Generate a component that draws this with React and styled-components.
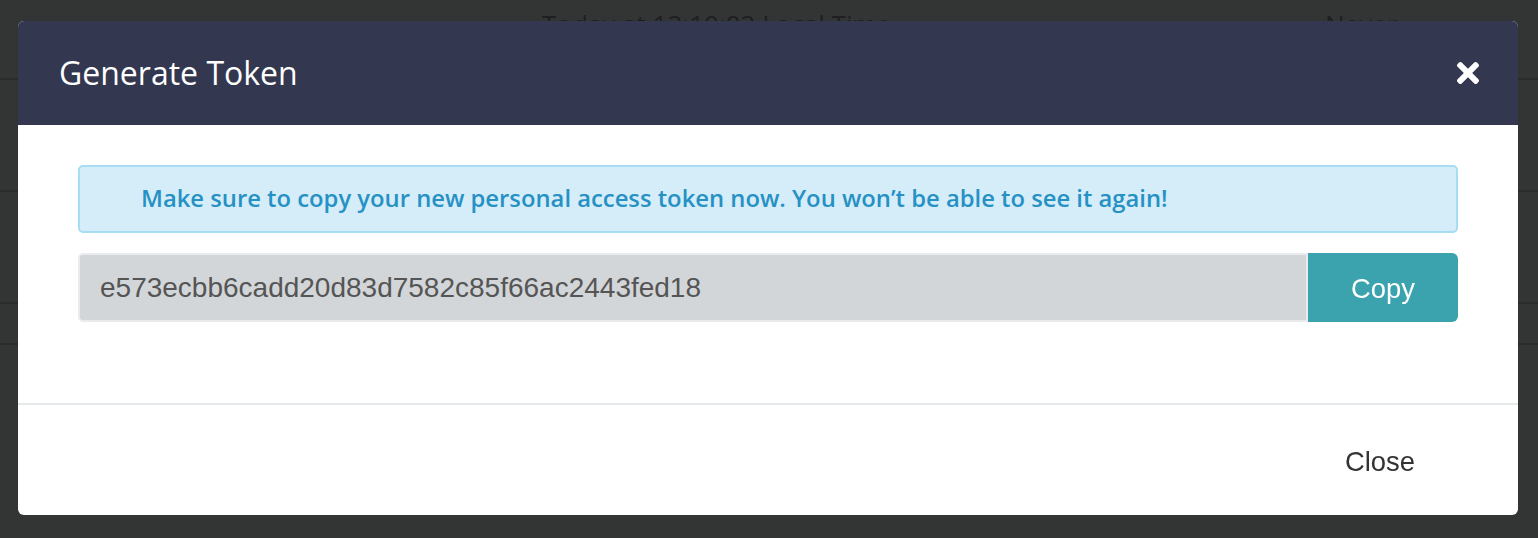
import styled, { createGlobalStyle } from "styled-components";
import { FaTimes } from "react-icons/fa";

const GlobalStyle = createGlobalStyle`
  html, body {
    margin: 0;
    padding: 0;
    background: #333434;
    font-family: "Open Sans", "Liberation Sans", sans-serif;
  }
`;

const TOKEN = "e573ecbb6cadd20d83d7582c85f66ac2443fed18";

function App() {
  return (
    <>
      <GlobalStyle />
      <Page>
        <TableRow $height={80}>
          <Cell $width={542} />
          <Cell $width={783}>Today at 12:10:02 Local Time</Cell>
          <Cell>Never</Cell>
        </TableRow>
        <TableRow $height={112} />
        <TableRow $height={112} />
        <TableRow $height={41} />
      </Page>

      <Backdrop>
        <Modal>
          <ModalHeader>
            <ModalTitle>Generate Token</ModalTitle>
            <CloseIcon aria-label="Close">
              <FaTimes />
            </CloseIcon>
          </ModalHeader>
          <ModalBody>
            <Alert>
              Make sure to copy your new personal access token now. You won’t be
              able to see it again!
            </Alert>
            <InputGroup>
              <TokenInput readOnly value={TOKEN} />
              <CopyButton>Copy</CopyButton>
            </InputGroup>
          </ModalBody>
          <ModalFooter>
            <FooterButton>Close</FooterButton>
          </ModalFooter>
        </Modal>
      </Backdrop>
    </>
  );
}

const Page = styled.div`
  width: 1538px;
  height: 538px;
  overflow: hidden;
  display: flex;
  flex-direction: column;
`;

const TableRow = styled.div`
  height: ${({ $height }) => $height}px;
  flex-shrink: 0;
  display: flex;
  border-bottom: 2px solid #2b2b2b;
  box-sizing: border-box;
`;

const Cell = styled.div`
  width: ${({ $width }) => ($width ? `${$width}px` : "auto")};
  flex-shrink: 0;
  padding-top: 6px;
  font-size: 26px;
  color: #1f1f1f;
`;

const Backdrop = styled.div`
  position: fixed;
  inset: 0;
`;

const Modal = styled.div`
  position: absolute;
  left: 18px;
  top: 21px;
  width: 1500px;
  height: 494px;
  background: #fff;
  border-radius: 6px;
  overflow: hidden;
  display: flex;
  flex-direction: column;
`;

const ModalHeader = styled.div`
  height: 104px;
  flex-shrink: 0;
  background: #333850;
  display: flex;
  align-items: center;
  justify-content: space-between;
  padding: 0 38px 0 41px;
  box-sizing: border-box;
`;

const ModalTitle = styled.h4`
  margin: 0 0 2px;
  font-family: "Open Sans", sans-serif;
  font-weight: 400;
  font-size: 32px;
  color: #fff;
`;

const CloseIcon = styled.span`
  display: flex;
  color: #fff;

  & svg {
    width: 24px;
    height: 32px;
  }
`;

const ModalBody = styled.div`
  padding: 40px 60px 0;
  height: 278px;
  flex-shrink: 0;
  box-sizing: border-box;
  display: flex;
  flex-direction: column;
  gap: 20px;
`;

const Alert = styled.div`
  height: 68px;
  box-sizing: border-box;
  display: flex;
  align-items: center;
  padding: 0 0 2px 61px;
  background: #d5edf8;
  border: 2px solid #a6dcf4;
  border-radius: 5px;
  color: #2691c4;
  font-family: "Open Sans", sans-serif;
  font-weight: 600;
  font-size: 23.8px;
  white-space: nowrap;
`;

const InputGroup = styled.div`
  display: flex;
  height: 69px;
`;

const TokenInput = styled.input`
  flex: 1;
  min-width: 0;
  box-sizing: border-box;
  height: 100%;
  padding: 0 0 0 20px;
  background: #d3d6d9;
  border: 2px solid #e9ebed;
  border-radius: 5px 0 0 5px;
  font-family: "Liberation Sans", Arial, sans-serif;
  font-size: 28px;
  color: #555;
  outline: none;
`;

const CopyButton = styled.button`
  width: 150px;
  flex-shrink: 0;
  border: none;
  border-radius: 0 6px 6px 0;
  background: #3aa3ad;
  color: #fff;
  font-family: "Liberation Sans", Arial, sans-serif;
  font-size: 27.4px;
  padding: 3px 0 0;
`;

const ModalFooter = styled.div`
  flex: 1;
  border-top: 2px solid #e6e9ec;
  display: flex;
  align-items: center;
  justify-content: flex-end;
  padding: 0 60px 0 0;
`;

const FooterButton = styled.button`
  background: none;
  border: none;
  padding: 0 43px;
  font-family: "Liberation Sans", Arial, sans-serif;
  font-size: 27.4px;
  color: #333;
  margin-top: 4px;
`;

export default App;
